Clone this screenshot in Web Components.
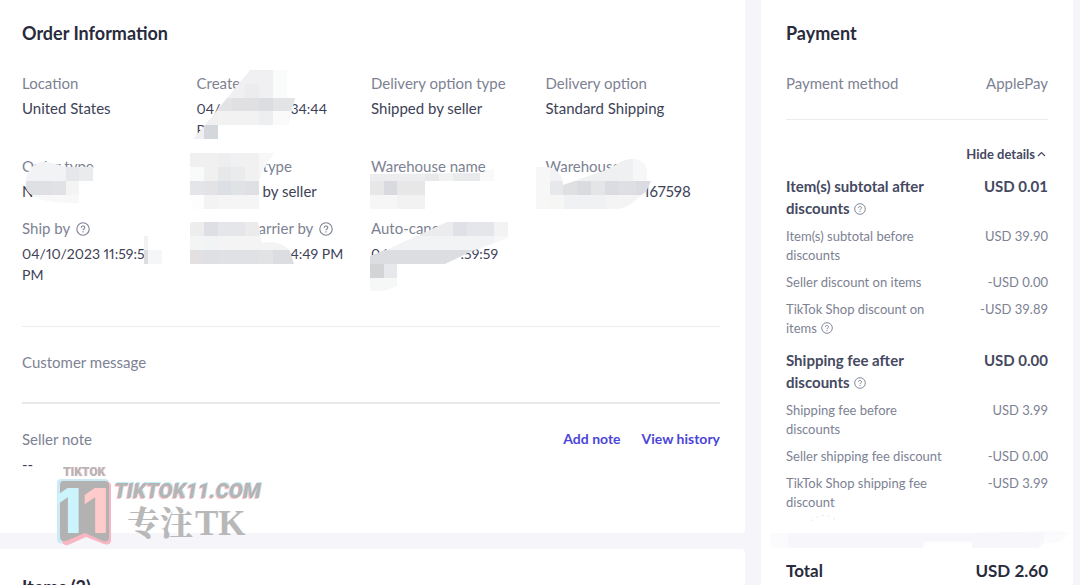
<!DOCTYPE html>
<html lang="en">
<head>
<meta charset="utf-8">
<title>Order details</title>
<style>
  body { margin: 0; background: #f5f5fa; font-family: Lato, "Open Sans", sans-serif; color: #3e4257; }
</style>
</head>
<body>
<order-page></order-page>

<script>
const define = (name, html, setup) => {
  const template = document.createElement('template');
  template.innerHTML = html;
  customElements.define(name, class extends HTMLElement {
    constructor() {
      super();
      this.attachShadow({ mode: 'open' }).append(template.content.cloneNode(true));
    }
    connectedCallback() { if (setup) setup(this, this.shadowRoot); }
  });
};

define('help-icon', `
  <style>
    :host { display: inline-block; width: 14px; height: 14px; vertical-align: -2px; margin-left: 2px; color: #7d8293; }
    :host([small]) { width: 12px; height: 12px; vertical-align: -1px; margin-left: 1px; }
    svg { display: block; width: 100%; height: 100%; }
  </style>
  <svg viewBox="0 0 14 14" fill="none" stroke="currentColor" stroke-width="1.1" role="img" aria-label="Help">
    <circle cx="7" cy="7" r="6.2"/>
    <path d="M5.2 5.7a1.8 1.6 0 1 1 2.7 1.3c-.6.4-.9.6-.9 1.3M7 9.3v1.2"/>
  </svg>`);

define('page-card', `
  <style>
    :host { display: block; box-sizing: border-box; background: #fff; padding: 21px 25px 0; }
    h2 { margin: 0; font-size: 18px; line-height: 24px; font-weight: 700; color: #292b3d; }
  </style>
  <h2></h2><slot></slot>`,
  (host, root) => { root.querySelector('h2').textContent = host.getAttribute('heading'); });

/* Blurred-out areas: an outline plus the blocks of colour inside it, per field. */
const COVERS = {
  created: {
    at: [197, 73],
    outline: 'M250 70H287V98H295L288 125H218V139H193L205 125Z',
    cells: [[190,70,110,70,'#f0f0f2'],[245,84,14,14,'#ececee'],[273,70,14,28,'#fafcfc'],[204,98,28,13,'#e3e3e5'],[232,98,28,13,'#e0e0e2'],[259,98,14,13,'#dcdde0'],[273,98,24,13,'#e3e4e6'],[218,111,41,14,'#f2f2f3'],[259,111,14,14,'#edeef0'],[273,111,20,14,'#fafafa'],[204,125,14,14,'#d4d7db']]
  },
  orderType: {
    at: [22, 156],
    outline: 'M26 187C24 167 38 159 52 163L66 167H93V181H79V203C54 203 29 200 26 187Z',
    cells: [[20,160,80,44,'#f2f3f4'],[66,167,13,14,'#e6e7ea'],[79,167,14,14,'#eaebed'],[20,181,32,14,'#dfe0e3'],[52,181,14,14,'#e1e2e5'],[66,181,13,14,'#f4f4f5'],[20,195,60,8,'#f8f8f8']]
  },
  deliveryType: {
    at: [197, 156],
    outline: 'M190 153H274L263 170L259 181V209H192L190 195Z',
    cells: [[190,153,28,14,'#f0f0f1'],[218,153,13,14,'#eceef0'],[231,153,28,14,'#f1f1f2'],[259,153,16,30,'#f7f7f7'],[190,167,14,14,'#f9fafa'],[204,167,14,14,'#f0f0f1'],[218,167,13,14,'#e7e8ea'],[231,167,14,14,'#eaebed'],[245,167,14,14,'#f1f1f2'],[190,181,14,14,'#e4e5e8'],[204,181,14,14,'#e3e2e4'],[218,181,13,14,'#dcdfe5'],[231,181,14,14,'#e1e2e5'],[245,181,14,14,'#dfe0e3'],[190,195,14,14,'#fdfdfd'],[204,195,14,14,'#f3f3f4'],[218,195,41,14,'#f5f5f6']]
  },
  warehouseName: {
    at: [371, 156],
    outline: 'M370 174L480 173L494 169V181H480V181H425V209H370Z',
    cells: [[370,168,55,13,'#ededef'],[425,168,14,13,'#e8e9eb'],[439,168,14,13,'#f2f2f3'],[453,168,27,13,'#e9eaec'],[480,168,14,13,'#f9f9fa'],[370,181,14,14,'#e7e7e8'],[384,181,13,14,'#d9dadf'],[397,181,28,14,'#e7e7e8'],[370,195,27,14,'#f6f6f6'],[397,195,28,14,'#f2f2f3']]
  },
  warehouseId: {
    at: [546, 156],
    outline: 'M536 167H547C557 168 563 176 563 185L606 170C616 166 621 159 633 159C641 159 647 164 647 172V181H651L646 192C638 196 630 209 617 209H536Z',
    cells: [[536,159,14,50,'#f7f7f8'],[550,159,14,22,'#f3f3f5'],[564,159,69,22,'#eff0f2'],[633,159,14,22,'#f7f7f8'],[550,181,13,14,'#e6e8eb'],[563,181,14,14,'#dfe0e2'],[577,181,14,14,'#d9dbdf'],[591,181,14,14,'#e4e5e7'],[605,181,13,14,'#dadce1'],[618,181,18,14,'#dedfe2'],[636,181,16,14,'#dbdce1'],[550,195,14,14,'#f6f6f5'],[564,195,42,14,'#f0f1f2'],[605,195,40,14,'#f4f4f5']]
  },
  shipBy: {
    at: [22, 218],
    outline: 'M144 236H172V264H144Z',
    cells: [[144,236,28,28,'#ffffff'],[144,236,4,14,'#f2f2f3'],[144,250,4,14,'#dcdde1'],[148,250,14,14,'#f5f6f8']]
  },
  carrier: {
    at: [197, 218],
    outline: 'M190 223L194 222H258L262 243C272 241 283 242 290 251L294 264H190Z',
    cells: [[190,222,14,14,'#ededee'],[204,222,14,14,'#dddfe4'],[218,222,27,14,'#e4e6e9'],[245,222,16,14,'#ebebec'],[190,236,14,14,'#f3f4f4'],[204,236,14,14,'#f0f4f4'],[218,236,80,14,'#f4f4f5'],[190,250,14,14,'#e3e0e2'],[204,250,14,14,'#dfe0e3'],[218,250,41,14,'#e0e1e4'],[259,250,14,14,'#e2e3e5'],[273,250,22,14,'#dcdde0']]
  },
  autoCancel: {
    at: [371, 218],
    outline: 'M370 256L390 248L430 230L447 222H508V238L470 252L445 264H397V286L384 291H370Z',
    cells: [[420,222,33,14,'#ececee'],[453,222,14,14,'#dfe1e6'],[467,222,27,14,'#e4e6ea'],[494,222,14,16,'#f3f3f4'],[370,236,124,14,'#f2f3f4'],[494,236,14,14,'#f7f7f8'],[370,250,120,14,'#dcdde0'],[370,264,14,14,'#d2d4d6'],[384,264,13,14,'#e6e8eb'],[370,278,27,14,'#f6f8f8']]
  }
};

define('order-field', `
  <style>
    :host { display: block; position: relative; font-size: 15px; line-height: 21px; white-space: nowrap; }
    .label { color: #7d8293; margin-bottom: 4px; }
    .value { color: #3e4257; font-variant-numeric: proportional-nums; }
    :host([date]) .value { font-size: 14px; }
    svg { position: absolute; left: 0; top: 0; width: 1px; height: 1px; overflow: visible; }
  </style>
  <div class="label"><slot name="label"></slot></div>
  <div class="value"><slot></slot></div>`,
  (host, root) => {
    const cover = COVERS[host.getAttribute('cover')];
    if (!cover) return;
    const id = host.getAttribute('cover');
    const blocks = cover.cells.map(([x, y, w, h, c]) => `<rect x="${x}" y="${y}" width="${w}" height="${h}" fill="${c}"/>`).join('');
    root.querySelector('.value').insertAdjacentHTML('afterend',
      `<svg aria-hidden="true" shape-rendering="crispEdges"><clipPath id="${id}"><path d="${cover.outline}"/></clipPath>
       <g transform="translate(${-cover.at[0]} ${-cover.at[1]})"><g clip-path="url(#${id})">${blocks}</g></g></svg>`);
  });

define('order-facts', `
  <style>
    :host { display: grid; grid-template-columns: repeat(4, minmax(0, 1fr)); row-gap: 16px; margin-top: 28px; }
    i { display: inline-block; }
    .date { width: 70px; }
    .type { width: 66px; }
    .id { width: 98px; }
    .carrier { width: 62px; }
    .time { width: 94px; }
    .cancel { width: 72px; }
  </style>
  <order-field><span slot="label">Location</span>United States</order-field>
  <order-field date cover="created"><span slot="label">Create</span>04/<i class="date"></i>34:44<br>P</order-field>
  <order-field><span slot="label">Delivery option type</span>Shipped by seller</order-field>
  <order-field><span slot="label">Delivery option</span>Standard Shipping</order-field>
  <order-field cover="orderType"><span slot="label">Order type</span>N</order-field>
  <order-field cover="deliveryType"><span slot="label"><i class="type"></i>type</span><i class="type"></i>by seller</order-field>
  <order-field cover="warehouseName"><span slot="label">Warehouse name</span></order-field>
  <order-field cover="warehouseId"><span slot="label">Warehouse I</span><i class="id"></i>167598</order-field>
  <order-field date cover="shipBy"><span slot="label">Ship by <help-icon></help-icon></span>04/10/2023 11:59:59<br>PM</order-field>
  <order-field date cover="carrier"><span slot="label"><i class="carrier"></i>arrier by <help-icon></help-icon></span><i class="time"></i>4:49 PM</order-field>
  <order-field date cover="autoCancel"><span slot="label">Auto-canc</span>04<i class="cancel"></i>:59:59</order-field>`);

define('order-notes', `
  <style>
    :host { display: block; margin-top: 41px; font-size: 15px; line-height: 22px; color: #7d8293; }
    section { border-top: 1px solid #ececef; padding: 24px 0 29px; }
    section + section { border-top: 2px solid #e8e8eb; padding-bottom: 58px; }
    header { display: flex; gap: 21px; }
    header span { flex: 1; }
    a { color: #4b45d8; font-size: 14px; font-weight: 700; text-decoration: none; }
    p { margin: 3px 0 0; color: #3e4257; }
  </style>
  <section>Customer message</section>
  <section>
    <header><span>Seller note</span><a href="#add">Add note</a><a href="#history">View history</a></header>
    <p>--</p>
  </section>`);

define('price-row', `
  <style>
    :host { display: flex; justify-content: space-between; align-items: flex-start; margin-top: 8px; font-size: 13px; line-height: 19px; color: #7d8293; }
    .name { width: 160px; }
    .amount { white-space: nowrap; }
    :host([strong]) { margin-top: 11px; font-size: 15px; line-height: 22px; font-weight: 700; color: #454961; }
    :host([method]) { margin-top: 27px; font-size: 15px; line-height: 22px; }
    :host([total]) { margin-top: 12px; font-size: 17px; line-height: 22px; font-weight: 700; color: #292b3d; }
  </style>
  <span class="name"><slot></slot></span><span class="amount"></span>`,
  (host, root) => { root.querySelector('.amount').textContent = host.getAttribute('amount'); });

define('payment-summary', `
  <style>
    :host { display: block; }
    hr { border: 0; border-top: 1px solid #ececef; margin: 25px 0 24px; }
    button { display: flex; align-items: center; gap: 2px; margin: 0 2px 0 auto; padding: 0; border: 0; background: none; font: 700 13px/20px Lato, sans-serif; color: #454961; }
    button svg { width: 9px; height: 9px; }
    .band { display: block; width: calc(100% + 40px); height: 36px; margin: 0 -18px; }
  </style>
  <price-row method amount="ApplePay">Payment method</price-row>
  <hr>
  <button type="button">Hide details<svg viewBox="0 0 9 9" fill="none" stroke="currentColor" stroke-width="1.2" aria-hidden="true"><path d="M1 6l3.5-3.5L8 6"/></svg></button>
  <price-row strong amount="USD 0.01">Item(s) subtotal after discounts <help-icon small></help-icon></price-row>
  <price-row amount="USD 39.90">Item(s) subtotal before discounts</price-row>
  <price-row amount="-USD 0.00">Seller discount on items</price-row>
  <price-row amount="-USD 39.89">TikTok Shop discount on items <help-icon small></help-icon></price-row>
  <price-row strong amount="USD 0.00">Shipping fee after discounts <help-icon small></help-icon></price-row>
  <price-row amount="USD 3.99">Shipping fee before discounts</price-row>
  <price-row amount="-USD 0.00">Seller shipping fee discount</price-row>
  <price-row amount="-USD 3.99">TikTok Shop shipping fee discount</price-row>
  <svg class="band" viewBox="0 0 302 36" preserveAspectRatio="none" aria-hidden="true">
    <path d="M43 9q13-11 26 0" fill="none" stroke="#e4e4ea" stroke-dasharray="2 4"/>
    <path d="M1 21H195L290 19L302 21L292 30L274 32L270 36H204V31H158L154 37H4Z" fill="#fbfbfd"/>
    <path d="M20 21H195L276 20V30L270 36H204V29H156L154 37H20Z" fill="#f7f7fb"/>
  </svg>
  <price-row total amount="USD 2.60">Total</price-row>`);

define('site-watermark', `
  <style>
    :host { position: absolute; left: 54px; top: 462px; pointer-events: none; }
    svg { display: block; width: 212px; height: 86px; }
    .top { font: 900 12px Roboto, sans-serif; filter: drop-shadow(1px 0 0 #ffd0d8); }
    .site { font: italic 900 21px Roboto, sans-serif; filter: drop-shadow(1px -1px 0 #c0edf5) drop-shadow(-1px 1px 0 #ffc3cc); }
    .digit { font: 800 62px Inter, sans-serif; }
    .han { font: 900 33px "Noto Serif CJK SC", "Noto Sans CJK SC", serif; }
    .tk { font: 700 35px "Liberation Serif", serif; }
  </style>
  <svg viewBox="0 0 212 86" aria-label="TIKTOK11.COM">
    <path d="M7 17H51Q55 17 55 21V79Q54 83 49 81L30 73L11 81Q3 83 3 77V21Q3 17 7 17Z" fill="#cdeaf4"/>
    <path d="M11 20H53Q57 20 57 24V79Q56 84 50 82L32 75L14 83Q8 84 8 78V24Q8 20 11 20Z" fill="#f8b6c2"/>
    <path d="M9 19H51Q55 19 55 23V76Q54 81 49 79L31 71L12 79Q6 80 6 75V23Q6 19 9 19Z" fill="#b2b2b2"/>
    <text class="digit" x="28" y="71" text-anchor="middle" fill="#ccf4fc">1<tspan fill="#ffcaca">1</tspan></text>
    <text class="top" x="9" y="14" fill="#b5b5b5">TIKTOK</text>
    <text class="site" x="60" y="36" fill="#b5b5b5">TIKTOK11.COM</text>
    <g fill="#b8b8b8"><text class="han" x="73" y="73">专注</text><text class="tk" x="141" y="73">TK</text></g>
  </svg>`);

define('order-page', `
  <style>
    :host { display: grid; grid-template-columns: minmax(0, 1fr) 312px; gap: 16px; height: 100vh; overflow: hidden; position: relative; padding-right: 7px; box-sizing: border-box; }
    .left { display: flex; flex-direction: column; gap: 16px; }
    .order { padding-left: 22px; border-radius: 0 0 4px 0; }
    .items { border-radius: 0 4px 0 0; padding: 26px 25px 24px 22px; }
  </style>
  <div class="left">
    <page-card class="order" heading="Order Information">
      <order-facts></order-facts>
      <order-notes></order-notes>
    </page-card>
    <page-card class="items" heading="Items (2)"></page-card>
  </div>
  <page-card heading="Payment"><payment-summary></payment-summary></page-card>
  <site-watermark></site-watermark>`);
</script>
</body>
</html>
